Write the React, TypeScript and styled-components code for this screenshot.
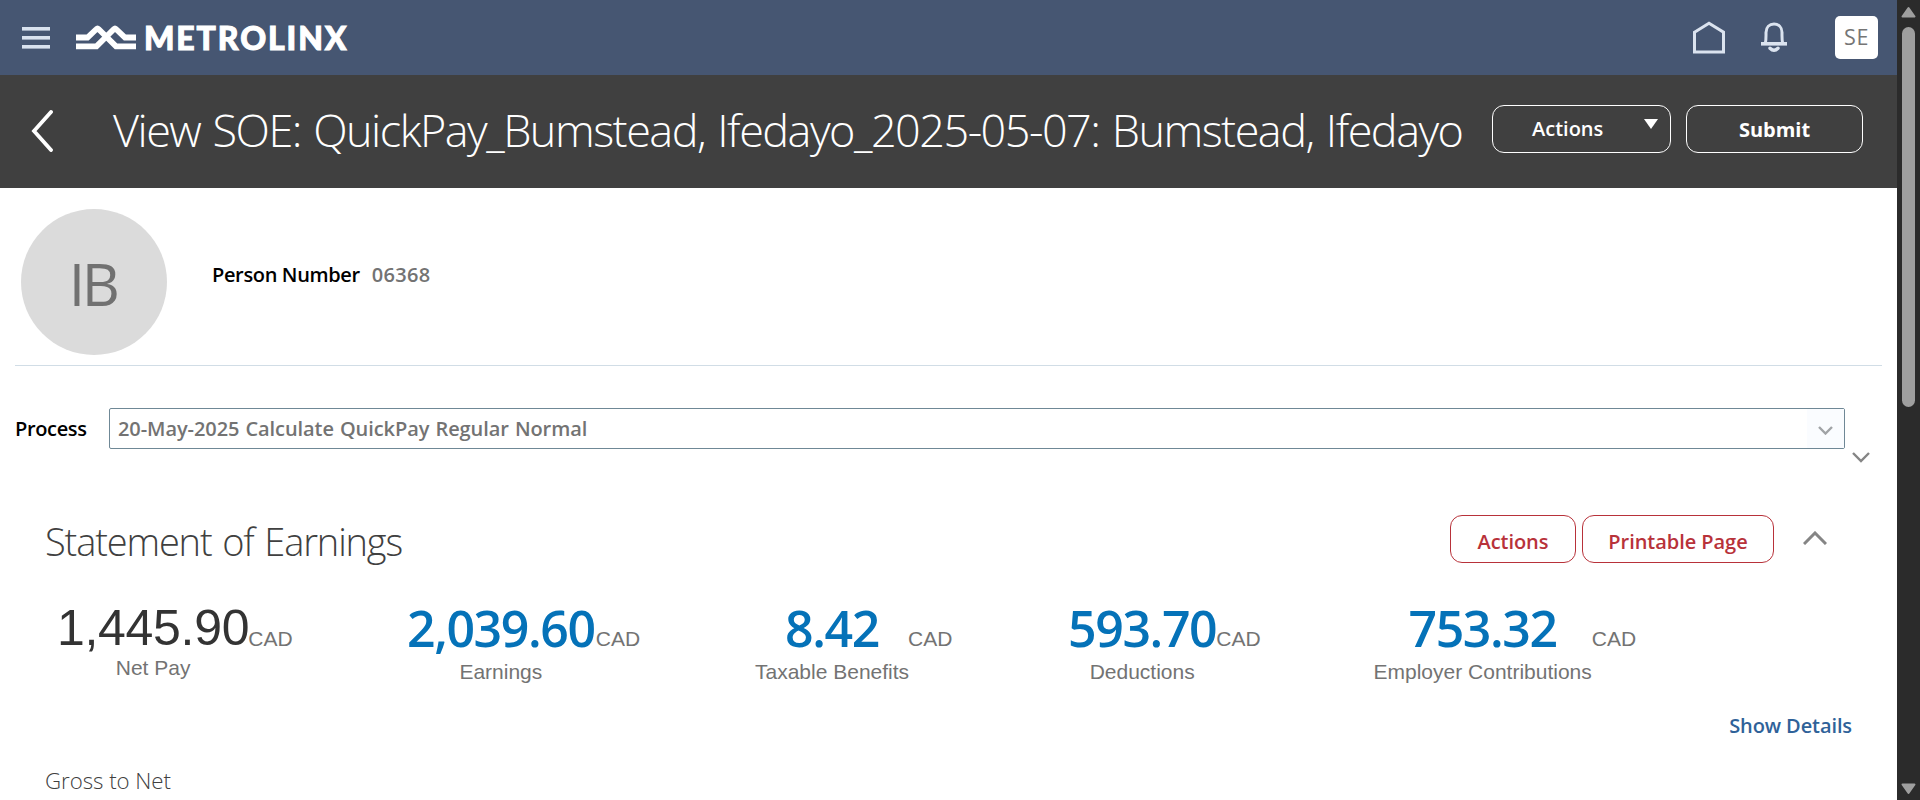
import React from "react";
import styled, { createGlobalStyle } from "styled-components";

const GlobalStyle = createGlobalStyle`
  *, *::before, *::after { box-sizing: border-box; }
  body {
    margin: 0;
    overflow: hidden;
    background: #fff;
    font-family: "Open Sans", "Noto Sans", sans-serif;
    font-size: 20px;
    font-weight: 600;
  }
  button { font: inherit; margin: 0; background: none; cursor: pointer; }
`;

const Window = styled.div`
  display: flex;
  width: 1920px;
  height: 800px;
  overflow: hidden;
`;

const Page = styled.div`
  flex: 1;
  min-width: 0;
  display: flex;
  flex-direction: column;
`;

const TopBar = styled.header`
  flex: none;
  display: flex;
  align-items: center;
  height: 75px;
  padding: 0 19px 0 22px;
  background: #465672;
`;

const MenuIcon = styled.svg`
  margin-right: 26px;
`;

const BrandName = styled.div`
  flex: 1;
  margin-left: 6px;
  color: #fff;
  font: 900 32px/40px Lato, sans-serif;
  letter-spacing: 1.9px;
  -webkit-text-stroke: 1px #fff;
`;

const HomeIcon = styled.svg`
  margin-right: 36px;
`;

const BellIcon = styled.svg`
  margin-right: 48px;
`;

const UserBadge = styled.div`
  width: 43px;
  height: 43px;
  border-radius: 5px;
  background: #fff;
  color: #757575;
  font-size: 21.5px;
  font-weight: 400;
  line-height: 41px;
  letter-spacing: 0.6px;
  text-align: center;
`;

const TitleBar = styled.div`
  flex: none;
  display: flex;
  align-items: center;
  height: 113px;
  padding: 0 34px 5px 31px;
  background: #404040;
  color: #fff;
`;

const BackIcon = styled.svg`
  margin-top: 3px;
`;

const PageTitle = styled.h1`
  flex: 1;
  margin: 2px 0 0 60px;
  font-size: 45px;
  font-weight: 300;
  line-height: 60px;
  letter-spacing: -1.51px;
  word-spacing: 2px;
  white-space: nowrap;
`;

const ActionsButton = styled.button`
  display: flex;
  align-items: center;
  width: 179px;
  height: 48px;
  padding: 0 12px 2px 39px;
  border: 1px solid #fff;
  border-radius: 12px;
  color: #fff;
  justify-content: space-between;
`;

const DropArrow = styled.svg`
  margin-bottom: 8px;
`;

const SubmitButton = styled.button`
  width: 177px;
  height: 48px;
  margin-left: 15px;
  padding: 0;
  border: 1px solid #fff;
  border-radius: 12px;
  color: #fff;
  font-weight: 700;
`;

const Content = styled.main`
  flex: 1;
  min-height: 0;
  padding: 0 15px;
`;

const Profile = styled.section`
  display: flex;
  height: 178px;
  padding: 21px 0 0 6px;
  border-bottom: 1px solid #d1dde6;
`;

const Avatar = styled.div`
  width: 146px;
  height: 146px;
  border-radius: 50%;
  background: #dbdbdb;
  color: #717171;
  font-size: 59px;
  font-weight: 400;
  line-height: 148px;
  letter-spacing: -3.6px;
  text-align: center;
  padding-right: 3px;
`;

const PersonNumber = styled.div`
  display: flex;
  margin: 51px 0 0 45px;
  line-height: 30px;
  color: #000;
  letter-spacing: -0.35px;
`;

const PersonValue = styled.span`
  margin-left: 12px;
  color: #737373;
  letter-spacing: 0.3px;
`;

const ProcessRow = styled.section`
  display: flex;
  align-items: flex-start;
  margin-top: 42px;
  height: 54px;
`;

const ProcessLabel = styled.label`
  width: 94px;
  line-height: 42px;
  color: #000;
  letter-spacing: -0.35px;
`;

const ProcessSelect = styled.div`
  display: flex;
  justify-content: space-between;
  width: 1736px;
  height: 41px;
  padding-left: 8px;
  border: 1px solid #6f8896;
  border-radius: 2px;
  line-height: 40px;
  color: #737373;
  letter-spacing: -0.08px;
  word-spacing: 1px;
`;

const SelectArrow = styled.span`
  display: flex;
  align-items: center;
  justify-content: center;
  width: 37px;
  padding-top: 4px;
  background: #fafcff;
`;

const ExpandIcon = styled.svg`
  margin: 44px 0 0 7px;
`;

const SectionHeader = styled.div`
  display: flex;
  align-items: center;
  height: 48px;
  margin-top: 53px;
  padding: 0 55px 0 30px;
`;

const SectionTitle = styled.h2`
  flex: 1;
  margin: 3px 0 0;
  color: #404040;
  font-size: 38px;
  font-weight: 300;
  line-height: 50px;
  letter-spacing: -1.14px;
  word-spacing: 2px;
`;

const OutlineButton = styled.button<{ $width: number }>`
  width: ${(p) => p.$width}px;
  height: 48px;
  margin-right: 6px;
  padding: 4px 0 0;
  border: 1px solid #b8323a;
  border-radius: 12px;
  color: #b8323a;
  letter-spacing: -0.05px;
`;

const CollapseIcon = styled.svg`
  margin: 0 0 3px 23px;
`;

const Stats = styled.div`
  display: grid;
  grid-template-columns: 352px 348px 313px 305.5px auto;
  height: 84px;
  margin: 37px 0 0 40px;
`;

const Stat = styled.div<{ $plain?: boolean }>`
  display: grid;
  grid-template-columns: auto 1fr;
  grid-template-rows: ${(p) => (p.$plain ? "56px" : "60px")} 24px;
  align-items: start;
  justify-items: start;
  margin-left: ${(p) => (p.$plain ? "2px" : "0")};
  font: 400 21px/24px "Liberation Sans", Arial, sans-serif;
  color: #737373;
`;

const Amount = styled.span<{ $plain?: boolean }>`
  justify-self: center;
  font: ${(p) =>
    p.$plain
      ? '400 50px/56px "Liberation Sans", Arial, sans-serif'
      : '600 50px/57px "Open Sans", sans-serif'};
  letter-spacing: ${(p) => (p.$plain ? "-0.3px" : "-1.39px")};
  color: ${(p) => (p.$plain ? "#333" : "#0572b8")};
`;

const Currency = styled.span<{ $shift: number }>`
  margin: 27px 0 0 ${(p) => p.$shift}px;
`;

const StatLabel = styled.span`
  justify-self: center;
`;

const DetailsRow = styled.div`
  display: flex;
  justify-content: flex-end;
  margin: 28px 30px 0 0;
  line-height: 28px;
  letter-spacing: -0.1px;
`;

const DetailsLink = styled.a`
  color: #2f6299;
`;

const GrossHeading = styled.h3`
  margin: 27px 0 0 30px;
  color: #404040;
  font-size: 22.3px;
  font-weight: 300;
  line-height: 28px;
  letter-spacing: -0.05px;
`;

const Scrollbar = styled.aside`
  display: flex;
  flex-direction: column;
  align-items: center;
  justify-content: space-between;
  width: 23px;
  padding: 6px 0 5px;
  background: #2b2b2b;
`;

const Track = styled.div`
  flex: 1;
  padding-top: 9px;
`;

const Thumb = styled.div`
  width: 13px;
  height: 380px;
  border-radius: 7px;
  background: #9f9f9f;
`;

const stats = [
  { amount: "1,445.90", label: "Net Pay", plain: true, shift: -1 },
  { amount: "2,039.60", label: "Earnings", shift: 1 },
  { amount: "8.42", label: "Taxable Benefits", shift: -1 },
  { amount: "593.70", label: "Deductions", shift: 0 },
  { amount: "753.32", label: "Employer Contributions", shift: 0 },
];

export default function App() {
  return (
    <Window>
      <GlobalStyle />
      <Page>
        <TopBar>
          <MenuIcon width="28" height="22" viewBox="0 0 28 22" fill="#d9e2ef">
            <rect y="0" width="28" height="3.6" />
            <rect y="9" width="28" height="3.6" />
            <rect y="18" width="28" height="3.6" />
          </MenuIcon>
          <svg width="62" height="28" viewBox="0 0 62 28" fill="none" stroke="#fff" strokeWidth="5.8">
            <path d="M0 13.5H11.5L20.5 5Q21.5 4 22.5 5L40 22.3H60" />
            <path d="M0 22.3H20.5L38 5Q39 4 40 5L49 13.5H60" />
          </svg>
          <BrandName>METROLINX</BrandName>
          <HomeIcon width="32" height="33" viewBox="0 0 32 33" fill="none" stroke="#dbe3ef" strokeWidth="3">
            <path d="M1.5 11.2L16 2.2L30.5 11.2V31H1.5Z" />
          </HomeIcon>
          <BellIcon width="26" height="31" viewBox="0 0 26 31" fill="none" stroke="#dbe3ef">
            <path d="M4.3 21.5C5.2 18 5 15 5 10.5C5 5 8.5 2 13 2S21 5 21 10.5C21 15 20.8 18 21.7 21.5" strokeWidth="3" />
            <path d="M0 21.8H26" strokeWidth="3.6" />
            <path d="M9 26.3Q13 30.3 17 26.3" strokeWidth="3.4" strokeLinecap="round" />
          </BellIcon>
          <UserBadge>SE</UserBadge>
        </TopBar>

        <TitleBar>
          <BackIcon width="22" height="42" viewBox="0 0 22 42" fill="none" stroke="#fff" strokeWidth="3.8">
            <path d="M20 2L3 21L20 40" strokeLinecap="round" />
          </BackIcon>
          <PageTitle>View SOE: QuickPay_Bumstead, Ifedayo_2025-05-07: Bumstead, Ifedayo</PageTitle>
          <ActionsButton>
            Actions
            <DropArrow width="14" height="10" viewBox="0 0 14 10" fill="#fff">
              <path d="M0 0H14L7 10Z" />
            </DropArrow>
          </ActionsButton>
          <SubmitButton>Submit</SubmitButton>
        </TitleBar>

        <Content>
          <Profile>
            <Avatar>IB</Avatar>
            <PersonNumber>
              Person Number<PersonValue>06368</PersonValue>
            </PersonNumber>
          </Profile>

          <ProcessRow>
            <ProcessLabel>Process</ProcessLabel>
            <ProcessSelect>
              20-May-2025 Calculate QuickPay Regular Normal
              <SelectArrow>
                <svg width="15" height="9" viewBox="0 0 15 9" fill="none" stroke="#a0a3a6" strokeWidth="2.4">
                  <path d="M1 1L7.5 7.5L14 1" />
                </svg>
              </SelectArrow>
            </ProcessSelect>
            <ExpandIcon width="18" height="11" viewBox="0 0 18 11" fill="none" stroke="#858585" strokeWidth="2.4">
              <path d="M1 1L9 9L17 1" />
            </ExpandIcon>
          </ProcessRow>

          <SectionHeader>
            <SectionTitle>Statement of Earnings</SectionTitle>
            <OutlineButton $width={126}>Actions</OutlineButton>
            <OutlineButton $width={192}>Printable Page</OutlineButton>
            <CollapseIcon width="24" height="14" viewBox="0 0 24 14" fill="none" stroke="#858585" strokeWidth="3">
              <path d="M1 13L12 2L23 13" />
            </CollapseIcon>
          </SectionHeader>

          <Stats>
            {stats.map((s) => (
              <Stat key={s.label} $plain={s.plain}>
                <Amount $plain={s.plain}>{s.amount}</Amount>
                <Currency $shift={s.shift}>CAD</Currency>
                <StatLabel>{s.label}</StatLabel>
              </Stat>
            ))}
          </Stats>

          <DetailsRow>
            <DetailsLink>Show Details</DetailsLink>
          </DetailsRow>
          <GrossHeading>Gross to Net</GrossHeading>
        </Content>
      </Page>

      <Scrollbar>
        <svg width="15" height="12" viewBox="0 0 15 12" fill="#9f9f9f" stroke="#9f9f9f" strokeWidth="2" strokeLinejoin="round">
          <path d="M7.5 2L13.5 10.5H1.5Z" />
        </svg>
        <Track>
          <Thumb />
        </Track>
        <svg width="15" height="12" viewBox="0 0 15 12" fill="#9f9f9f" stroke="#9f9f9f" strokeWidth="2" strokeLinejoin="round">
          <path d="M7.5 10L13.5 1.5H1.5Z" />
        </svg>
      </Scrollbar>
    </Window>
  );
}
